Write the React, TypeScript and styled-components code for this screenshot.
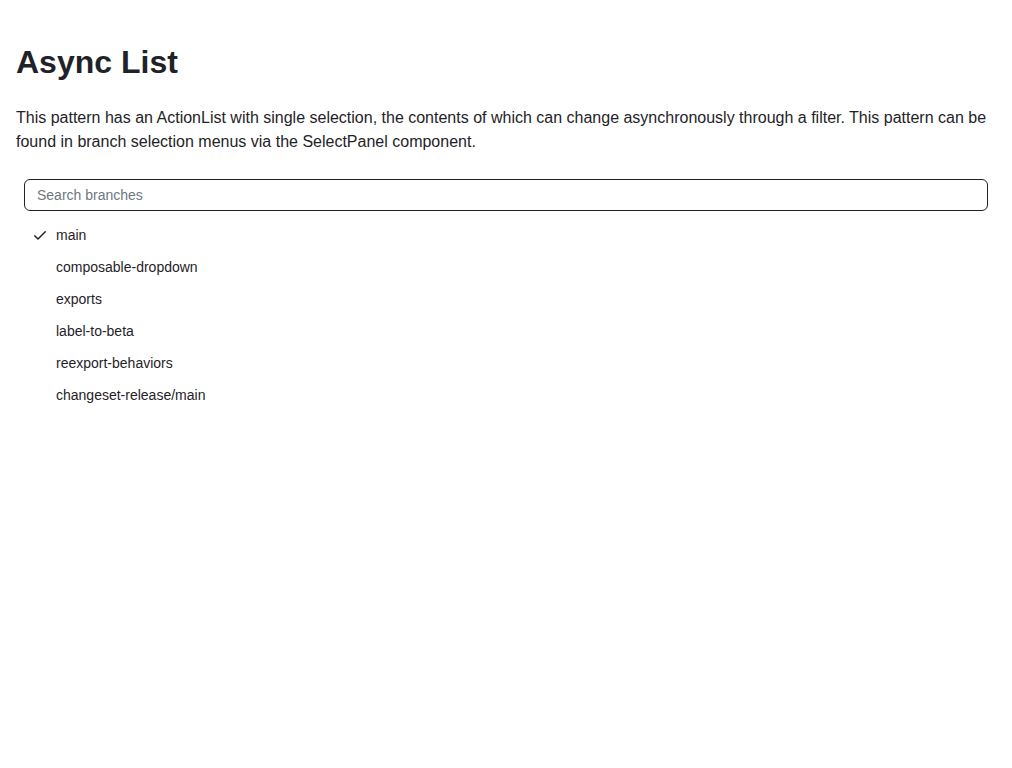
import styled, { createGlobalStyle } from "styled-components";
import { useState } from "react";

const branches = [
    "main",
    "composable-dropdown",
    "exports",
    "label-to-beta",
    "reexport-behaviors",
    "changeset-release/main",
];

function App() {
    const [selected, setSelected] = useState("main");
    const [filter, setFilter] = useState("");

    const visible = branches.filter((b) => b.toLowerCase().includes(filter.toLowerCase()));

    return (
        <Page>
            <GlobalStyle />
            <Title>Async List</Title>
            <Description>
                This pattern has an ActionList with single selection, the contents of which can change
                asynchronously through a filter. This pattern can be found in branch selection menus via the
                SelectPanel component.
            </Description>
            <Panel>
                <SearchInput
                    placeholder="Search branches"
                    value={filter}
                    onChange={(e) => setFilter(e.target.value)}
                />
                <List role="listbox">
                    {visible.map((name) => (
                        <Item key={name} role="option" aria-selected={name === selected} onClick={() => setSelected(name)}>
                            <Leading>
                                {name === selected && (
                                    <svg width="16" height="16" viewBox="0 0 16 16" fill="currentColor">
                                        <path d="M13.78 4.22a.75.75 0 0 1 0 1.06l-7.25 7.25a.75.75 0 0 1-1.06 0L2.22 9.28a.751.751 0 0 1 .018-1.042.751.751 0 0 1 1.042-.018L6 10.94l6.72-6.72a.75.75 0 0 1 1.06 0Z" />
                                    </svg>
                                )}
                            </Leading>
                            <Label>{name}</Label>
                        </Item>
                    ))}
                </List>
            </Panel>
        </Page>
    );
}

const GlobalStyle = createGlobalStyle`
body {
    margin: 0;
    background: #ffffff;
    color: #1f2328;
    font-family: "Liberation Sans", Arial, sans-serif;
}
`;

const Page = styled.div`
padding: 42px 16px 16px;
`;

const Title = styled.h1`
margin: 0 0 24px;
font-size: 32px;
font-weight: 700;
line-height: 40px;
color: #1f2328;
`;

const Description = styled.p`
margin: 0 0 25px;
font-size: 16px;
line-height: 24px;
`;

const Panel = styled.div`
padding: 0 8px;
display: flex;
flex-direction: column;
gap: 8px;
`;

const SearchInput = styled.input`
box-sizing: border-box;
height: 32px;
width: 100%;
padding: 0 12px;
border: 1px solid #1f2328;
border-radius: 6px;
font-family: inherit;
font-size: 14px;
color: #1f2328;
outline: none;

    &::placeholder {
        color: #6e7781;
    }
`;

const List = styled.ul`
list-style: none;
margin: 0;
padding: 0;
`;

const Item = styled.li`
display: flex;
align-items: center;
gap: 8px;
height: 32px;
padding: 0 8px;
border-radius: 6px;
cursor: pointer;
font-size: 14px;

    &:hover {
        background: rgba(208, 215, 222, 0.32);
    }
`;

const Leading = styled.span`
width: 16px;
height: 16px;
display: flex;
color: #1f2328;
`;

const Label = styled.span`
line-height: 20px;
`;

export default App;
